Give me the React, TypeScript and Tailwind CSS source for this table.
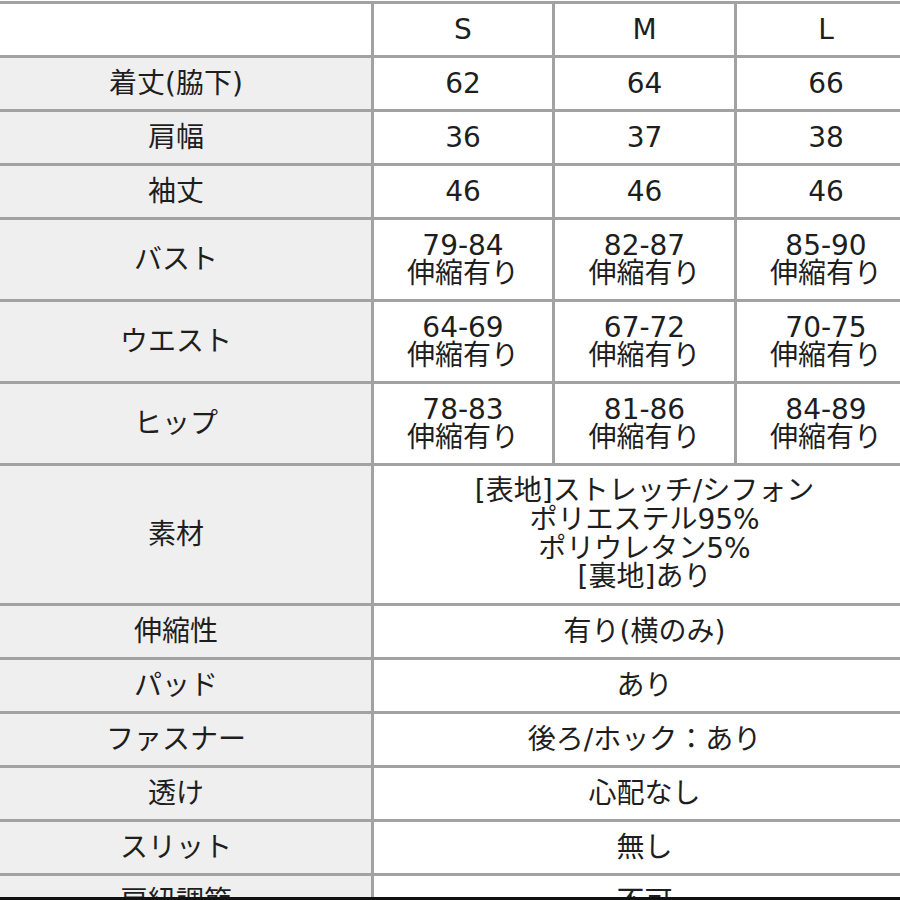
const SIZES = ['S', 'M', 'L']

type Row =
    | { label: string; h: string; values: string[][] }
    | { label: string; h: string; span: string[] }

const ROWS: Row[] = [
    { label: '着丈(脇下)', h: 'h-[51px]', values: [['62'], ['64'], ['66']] },
    { label: '肩幅', h: 'h-[51px]', values: [['36'], ['37'], ['38']] },
    { label: '袖丈', h: 'h-[51px]', values: [['46'], ['46'], ['46']] },
    {
        label: 'バスト',
        h: 'h-[79px]',
        values: [
            ['79-84', '伸縮有り'],
            ['82-87', '伸縮有り'],
            ['85-90', '伸縮有り'],
        ],
    },
    {
        label: 'ウエスト',
        h: 'h-[79px]',
        values: [
            ['64-69', '伸縮有り'],
            ['67-72', '伸縮有り'],
            ['70-75', '伸縮有り'],
        ],
    },
    {
        label: 'ヒップ',
        h: 'h-[79px]',
        values: [
            ['78-83', '伸縮有り'],
            ['81-86', '伸縮有り'],
            ['84-89', '伸縮有り'],
        ],
    },
    {
        label: '素材',
        h: 'h-[137px]',
        span: ['[表地]ストレッチ/シフォン', 'ポリエステル95%', 'ポリウレタン5%', '[裏地]あり'],
    },
    { label: '伸縮性', h: 'h-[51px]', span: ['有り(横のみ)'] },
    { label: 'パッド', h: 'h-[51px]', span: ['あり'] },
    { label: 'ファスナー', h: 'h-[51px]', span: ['後ろ/ホック：あり'] },
    { label: '透け', h: 'h-[51px]', span: ['心配なし'] },
    { label: 'スリット', h: 'h-[51px]', span: ['無し'] },
    { label: '肩紐調節', h: 'h-[51px]', span: ['不可'] },
]

function Cell({ lines, className }: { lines: string[]; className: string }) {
    return (
        <div className={`flex flex-col items-center justify-center text-center ${className}`}>
            {lines.map((line, i) => (
                <span key={i} className="whitespace-nowrap">
                    {line}
                </span>
            ))}
        </div>
    )
}

export default function App() {
    return (
        <div
            className="w-[900px] h-[900px] overflow-hidden bg-white text-[#1e1e1e] text-[28px] leading-[28px]"
            style={{ fontFamily: '"DejaVu Sans", "Noto Sans CJK JP", sans-serif' }}
        >
            {/* screenshot crops the table on both sides */}
            <div className="h-[897px] overflow-hidden">
                <div className="-ml-[19px] w-[934px] mt-[1px] pt-[3px] bg-[#a2a2a2] grid grid-cols-[390px_178px_179px_178px] gap-[3px]">
                    <div className="h-[51px] bg-white" />
                    {SIZES.map((s) => (
                        <Cell key={s} lines={[s]} className="h-[51px] bg-white" />
                    ))}

                    {ROWS.map((row) => (
                        <div key={row.label} className="contents">
                            <Cell lines={[row.label]} className={`${row.h} bg-[#efefef]`} />
                            {'span' in row ? (
                                <Cell
                                    lines={row.span}
                                    className={`${row.h} col-span-3 bg-white ${row.span.length > 2 ? 'leading-[28.7px]' : ''}`}
                                />
                            ) : (
                                row.values.map((v, i) => (
                                    <Cell key={i} lines={v} className={`${row.h} bg-white`} />
                                ))
                            )}
                        </div>
                    ))}
                </div>
            </div>
            <div className="h-[3px] bg-[#111]" />
        </div>
    )
}
